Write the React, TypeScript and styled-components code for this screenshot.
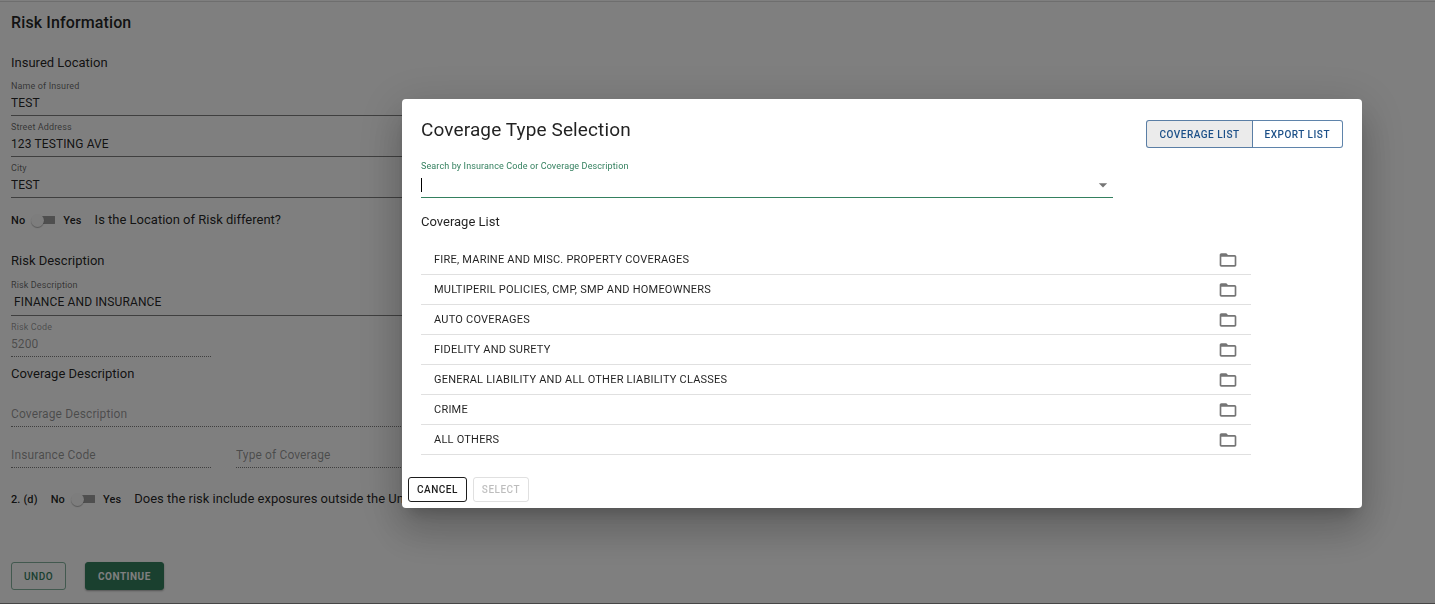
import React from "react";
import styled, { createGlobalStyle } from "styled-components";

const green = "#34805f";
const blue = "#1c5088";

const GlobalStyle = createGlobalStyle`
  *, *::before, *::after { box-sizing: border-box; }
  body {
    margin: 0;
    background: #ffffff;
    color: rgba(0, 0, 0, 0.87);
    font-family: Roboto, "Liberation Sans", sans-serif;
    font-size: 12px;
    letter-spacing: 0.01em;
  }
  button, input { font: inherit; letter-spacing: inherit; color: inherit; }
  h1, h2, h3, p, ul { margin: 0; padding: 0; }
`;

const Page = styled.main`
  border-top: 1px solid #dcdcdc;
  border-bottom: 1px solid #8c8c8c;
  margin-top: 1px;
  padding: 11px 11px 13px;
`;

const PageTitle = styled.h1`
  font-size: 16px;
  font-weight: 500;
  line-height: 20px;
`;

const SectionTitle = styled.h2<{ $top?: number; $bottom?: number }>`
  && {
    margin-top: ${(p) => p.$top ?? 0}px;
    margin-bottom: ${(p) => p.$bottom ?? 0}px;
  }
  font-size: 13px;
  font-weight: 400;
  line-height: 18px;
  letter-spacing: normal;
`;

const Stack = styled.div`
  display: flex;
  flex-direction: column;
  gap: 5px;
  width: 80%;
`;

const FieldRow = styled.div`
  display: flex;
  gap: 25px;
`;

const FieldBox = styled.div<{ $disabled?: boolean; $narrow?: boolean }>`
  display: flex;
  flex-direction: column;
  flex: ${(p) => (p.$narrow ? "0 0 200px" : "1 1 auto")};
  min-height: 36px;
  justify-content: flex-end;
  padding-bottom: 2px;
  border-bottom: 1px ${(p) => (p.$disabled ? "dotted" : "solid")} rgba(0, 0, 0, 0.5);
  color: ${(p) => (p.$disabled ? "rgba(0, 0, 0, 0.42)" : "inherit")};
`;

const FieldLabel = styled.label<{ $disabled?: boolean }>`
  font-size: 9px;
  line-height: 12px;
  color: ${(p) => (p.$disabled ? "rgba(0, 0, 0, 0.42)" : "rgba(0, 0, 0, 0.6)")};
`;

const FieldInput = styled.input<{ $padded?: boolean }>`
  height: ${(p) => (p.$padded ? 22 : 21)}px;
  width: 100%;
  padding: 0 ${(p) => (p.$padded ? 3 : 0)}px;
  border: 0;
  background: none;
  outline: none;
  font-size: 12px;
  &::placeholder { color: rgba(0, 0, 0, 0.42); opacity: 1; }
`;

const SwitchRow = styled.div<{ $top: number }>`
  display: flex;
  align-items: center;
  height: 22px;
  margin-top: ${(p) => p.$top}px;
`;

const SwitchLabel = styled.label`
  display: flex;
  align-items: center;
  font-size: 11px;
  font-weight: 500;
`;

const SwitchInput = styled.input`
  appearance: none;
  display: flex;
  align-items: center;
  width: 24px;
  height: 14px;
  margin: 0 8px 0 6px;
  background: linear-gradient(#9e9e9e, #9e9e9e) right center / 18px 8px no-repeat;
  border-radius: 4px;
  &::before {
    content: "";
    width: 13px;
    height: 13px;
    border-radius: 50%;
    background: #fafafa;
    box-shadow: 0 1px 1px rgba(0, 0, 0, 0.3);
  }
`;

const Question = styled.p`
  && { margin-left: 13px; }
  font-size: 13px;
  line-height: 18px;
  letter-spacing: normal;
`;

const QuestionNumber = styled.span`
  margin-right: 13px;
  font-size: 11px;
  font-weight: 500;
`;

const ButtonBar = styled.div`
  display: flex;
  gap: 19px;
  margin-top: 52px;
`;

const Button = styled.button<{ $kind: "outline" | "filled" | "dark" }>`
  height: ${(p) => (p.$kind === "dark" ? 25 : 28)}px;
  padding: 0 ${(p) => (p.$kind === "dark" ? 8 : 12)}px;
  border: 1px solid
    ${(p) => (p.$kind === "outline" ? "rgba(52, 128, 95, 0.6)" : p.$kind === "filled" ? green : "#1d1d1d")};
  border-radius: 3px;
  background: ${(p) => (p.$kind === "filled" ? green : "transparent")};
  color: ${(p) => (p.$kind === "outline" ? green : p.$kind === "filled" ? "#ffffff" : "#1d1d1d")};
  box-shadow: ${(p) => (p.$kind === "filled" ? "0 1px 2px rgba(0, 0, 0, 0.35)" : "none")};
  font-size: 10px;
  font-weight: ${(p) => (p.$kind === "filled" ? 700 : 500)};
  letter-spacing: 0.05em;
  &:disabled {
    border-color: rgba(0, 0, 0, 0.12);
    color: rgba(0, 0, 0, 0.26);
  }
`;

const Backdrop = styled.div`
  position: fixed;
  inset: 0;
  display: flex;
  justify-content: center;
  align-items: center;
  padding: 3px 0 0 329px;
  background: rgba(0, 0, 0, 0.5);
`;

const Dialog = styled.section`
  width: 100%;
  max-width: 960px;
  border-radius: 4px;
  background: #ffffff;
  box-shadow:
    0 11px 15px -7px rgba(0, 0, 0, 0.2),
    0 24px 38px 3px rgba(0, 0, 0, 0.14),
    0 9px 46px 8px rgba(0, 0, 0, 0.12);
`;

const DialogBody = styled.div`
  padding: 21px 19px 16px;
`;

const DialogHeader = styled.header`
  display: flex;
  justify-content: space-between;
  align-items: flex-start;
  margin-bottom: 12px;
`;

const DialogTitle = styled.h2`
  font-size: 19px;
  font-weight: 400;
  line-height: 20px;
`;

const ToggleGroup = styled.div`
  display: flex;
`;

const ToggleButton = styled.button<{ $active?: boolean }>`
  height: 28px;
  padding: 0 12px;
  border: 1px solid rgba(28, 80, 136, 0.7);
  background: ${(p) => (p.$active ? "#ebebeb" : "#ffffff")};
  color: ${blue};
  font-size: 10px;
  font-weight: 500;
  letter-spacing: 0.05em;
  &:first-child { border-radius: 3px 0 0 3px; }
  &:last-child { border-radius: 0 3px 3px 0; border-left: 0; }
`;

const Search = styled.div`
  width: 75%;
  border-bottom: 1px solid ${green};
`;

const SearchLabel = styled.label`
  display: block;
  color: ${green};
  font-size: 9px;
  line-height: 12px;
`;

const SearchLine = styled.div`
  display: flex;
  align-items: center;
  height: 25px;
`;

const Caret = styled.span`
  width: 1px;
  height: 14px;
  background: #000000;
`;

const SearchInput = styled.input`
  flex: 1;
  height: 21px;
  padding: 0;
  border: 0;
  outline: none;
  background: none;
  caret-color: transparent;
`;

const IconButton = styled.button`
  display: flex;
  padding: 0;
  border: 0;
  background: none;
  color: rgba(0, 0, 0, 0.54);
`;

const CoverageItems = styled.ul`
  width: 90%;
  list-style: none;
`;

const CoverageItem = styled.li`
  display: flex;
  justify-content: space-between;
  align-items: center;
  height: 30px;
  padding: 0 13px;
  border-bottom: 1px solid #e0e0e0;
  font-size: 11px;
  letter-spacing: 0.02em;
`;

const DialogActions = styled.footer`
  display: flex;
  gap: 6px;
  padding: 6px;
`;

const FolderIcon = () => (
  <svg width="20" height="20" viewBox="0 0 24 24" fill="currentColor" aria-hidden="true">
    <path d="M20 6h-8l-2-2H4c-1.1 0-1.99.9-1.99 2L2 18c0 1.1.9 2 2 2h16c1.1 0 2-.9 2-2V8c0-1.1-.9-2-2-2zm0 12H4V8h16v10z" />
  </svg>
);

const ArrowIcon = () => (
  <svg width="20" height="20" viewBox="0 0 24 24" fill="currentColor" aria-hidden="true">
    <path d="M7 10l5 5 5-5z" />
  </svg>
);

type FieldProps = {
  id: string;
  label?: string;
  value?: string;
  placeholder?: string;
  disabled?: boolean;
  narrow?: boolean;
  padded?: boolean;
};

const Field = ({ id, label, value, placeholder, disabled, narrow, padded }: FieldProps) => (
  <FieldBox $disabled={disabled} $narrow={narrow}>
    {label && (
      <FieldLabel htmlFor={id} $disabled={disabled}>
        {label}
      </FieldLabel>
    )}
    <FieldInput
      id={id}
      aria-label={label ? undefined : placeholder}
      defaultValue={value}
      placeholder={placeholder}
      disabled={disabled}
      $padded={padded}
    />
  </FieldBox>
);

const YesNo = ({ name }: { name: string }) => (
  <SwitchLabel>
    No
    <SwitchInput type="checkbox" role="switch" name={name} />
    <span>Yes</span>
  </SwitchLabel>
);

const coverages = [
  "FIRE, MARINE AND MISC. PROPERTY COVERAGES",
  "MULTIPERIL POLICIES, CMP, SMP AND HOMEOWNERS",
  "AUTO COVERAGES",
  "FIDELITY AND SURETY",
  "GENERAL LIABILITY AND ALL OTHER LIABILITY CLASSES",
  "CRIME",
  "ALL OTHERS",
];

export default function App() {
  return (
    <>
      <GlobalStyle />
      <Page>
        <PageTitle>Risk Information</PageTitle>
        <SectionTitle $top={21} $bottom={8}>Insured Location</SectionTitle>
        <Stack>
          <Field id="insured" label="Name of Insured" value="TEST" />
          <Field id="street" label="Street Address" value="123 TESTING AVE" />
          <Field id="city" label="City" value="TEST" />
        </Stack>
        <SwitchRow $top={11}>
          <YesNo name="different-location" />
          <Question>Is the Location of Risk different?</Question>
        </SwitchRow>
        <SectionTitle $top={21} $bottom={9}>Risk Description</SectionTitle>
        <Stack>
          <Field id="risk" label="Risk Description" value="FINANCE AND INSURANCE" padded />
          <FieldRow>
            <Field id="risk-code" label="Risk Code" value="5200" disabled narrow />
          </FieldRow>
        </Stack>
        <SectionTitle $top={8} $bottom={8}>Coverage Description</SectionTitle>
        <Stack>
          <Field id="coverage" placeholder="Coverage Description" disabled />
          <FieldRow>
            <Field id="insurance-code" placeholder="Insurance Code" disabled narrow />
            <Field id="coverage-type" placeholder="Type of Coverage" disabled />
          </FieldRow>
        </Stack>
        <SwitchRow $top={20}>
          <QuestionNumber>2. (d)</QuestionNumber>
          <YesNo name="outside-exposure" />
          <Question>Does the risk include exposures outside the United States?</Question>
        </SwitchRow>
        <ButtonBar>
          <Button type="button" $kind="outline">UNDO</Button>
          <Button type="button" $kind="filled">CONTINUE</Button>
        </ButtonBar>
      </Page>
      <Backdrop>
        <Dialog role="dialog" aria-modal="true" aria-labelledby="dialog-title">
          <DialogBody>
            <DialogHeader>
              <DialogTitle id="dialog-title">Coverage Type Selection</DialogTitle>
              <ToggleGroup>
                <ToggleButton type="button" $active>COVERAGE LIST</ToggleButton>
                <ToggleButton type="button">EXPORT LIST</ToggleButton>
              </ToggleGroup>
            </DialogHeader>
            <Search>
              <SearchLabel htmlFor="search">Search by Insurance Code or Coverage Description</SearchLabel>
              <SearchLine>
                <Caret />
                <SearchInput id="search" type="text" role="combobox" aria-expanded="false" />
                <IconButton type="button" aria-label="Open">
                  <ArrowIcon />
                </IconButton>
              </SearchLine>
            </Search>
            <SectionTitle as="h3" $top={15} $bottom={14}>Coverage List</SectionTitle>
            <CoverageItems>
              {coverages.map((name) => (
                <CoverageItem key={name}>
                  <span>{name}</span>
                  <IconButton type="button" aria-label={`Open ${name}`}>
                    <FolderIcon />
                  </IconButton>
                </CoverageItem>
              ))}
            </CoverageItems>
          </DialogBody>
          <DialogActions>
            <Button type="button" $kind="dark">CANCEL</Button>
            <Button type="button" $kind="dark" disabled>SELECT</Button>
          </DialogActions>
        </Dialog>
      </Backdrop>
    </>
  );
}
